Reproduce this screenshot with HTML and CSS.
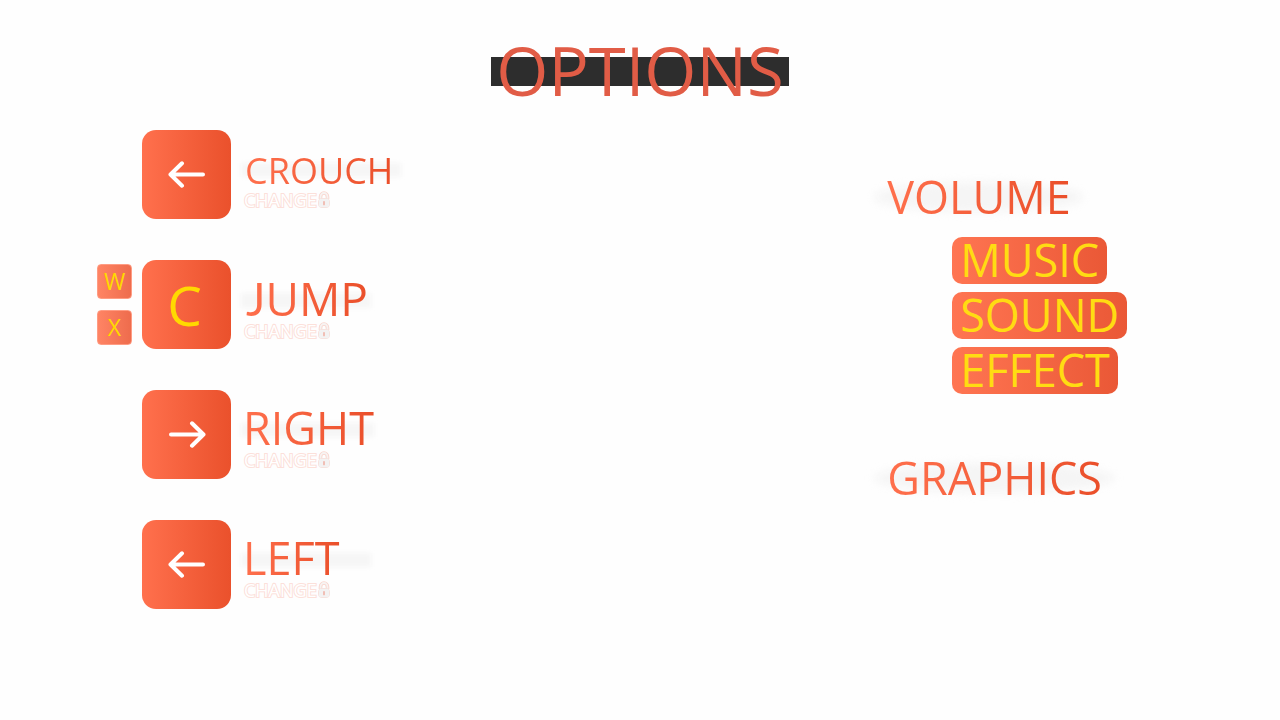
FILE: index.html
```html
<!DOCTYPE html>
<html lang="en">
<head>
<meta charset="utf-8">
<title>Options</title>
<meta name="viewport" content="width=device-width, initial-scale=1">
<link rel="stylesheet" href="styles.css">
</head>
<body>
<svg class="defs" width="0" height="0" aria-hidden="true">
  <symbol id="arrow" viewBox="0 0 38 28">
    <path d="M2.500 13.500H35M2.500 13.500L14 2.300M2.500 13.500L14 24.700" fill="none" stroke="#fff" stroke-width="4" stroke-linecap="round" stroke-linejoin="round"/>
  </symbol>
  <symbol id="lock" viewBox="0 0 14 18">
    <path d="M3.500 8V6a3.500 4 0 0 1 7 0V8" fill="none" stroke="#f9d5cd" stroke-width="3.600"/>
    <path d="M3.500 8V6a3.500 4 0 0 1 7 0V8" fill="none" stroke="#f7f3f2" stroke-width="1.800"/>
    <rect x="1.500" y="7.500" width="11" height="9" rx="3.500" fill="#f3f2f2" stroke="#f9d5cd"/>
    <path d="M7 10.800v2.600" stroke="#f0b9ae" stroke-width="1.800" stroke-linecap="round"/>
  </symbol>
</svg>
<header class="header"><h1 class="title">OPTIONS</h1></header>
<main class="options">
  <section class="controls" aria-label="Controls">
    <div class="control">
      <button class="key" aria-label="Crouch key: left arrow"><svg class="arrow"><use href="#arrow"/></svg></button>
      <div class="info">
        <h2 class="label label-compact"><span class="ink">CROUCH</span></h2>
        <button class="change">CHANGE<svg class="lock"><use href="#lock"/></svg></button>
      </div>
    </div>
    <div class="control">
      <div class="alternates">
        <button class="key key-small">W</button>
        <button class="key key-small">X</button>
      </div>
      <button class="key">C</button>
      <div class="info">
        <h2 class="label label-wide"><span class="ink"><span class="short-j">J</span>UMP</span></h2>
        <button class="change">CHANGE<svg class="lock"><use href="#lock"/></svg></button>
      </div>
    </div>
    <div class="control">
      <button class="key" aria-label="Right key: right arrow"><svg class="arrow arrow-right"><use href="#arrow"/></svg></button>
      <div class="info">
        <h2 class="label"><span class="ink">RIGHT</span></h2>
        <button class="change">CHANGE<svg class="lock"><use href="#lock"/></svg></button>
      </div>
    </div>
    <div class="control">
      <button class="key" aria-label="Left key: left arrow"><svg class="arrow"><use href="#arrow"/></svg></button>
      <div class="info">
        <h2 class="label"><span class="ink">LEFT</span></h2>
        <button class="change">CHANGE<svg class="lock"><use href="#lock"/></svg></button>
      </div>
    </div>
  </section>
  <div class="settings">
    <section class="group">
      <h2 class="heading"><span class="ink">VOLUME</span></h2>
      <div class="pills">
        <button class="pill">MUSIC</button>
        <button class="pill">SOUND</button>
        <button class="pill">EFFECT</button>
      </div>
    </section>
    <section class="group">
      <h2 class="heading"><span class="ink">GRAPHICS</span></h2>
    </section>
  </div>
</main>
</body>
</html>
```

FILE: styles.css
```css
* { box-sizing: border-box; }
body {
  margin: 0;
  background: #fefefe;
  font-family: "Open Sans", "Noto Sans", sans-serif;
}
h1, h2 { margin: 0; font-weight: 400; }
button {
  margin: 0;
  padding: 0;
  border: 0;
  background: none;
  font: inherit;
  cursor: pointer;
}
.defs { position: absolute; }

.header {
  display: flex;
  justify-content: center;
  padding: 30px 0 20px;
}
.title {
  padding: 0 5px;
  font-size: 67px;
  line-height: 80px;
  color: #e15c46;
  background: linear-gradient(#2d2d2d, #2d2d2d) 0 27px / 100% 29px no-repeat;
}

.options {
  display: grid;
  grid-template-columns: 69% 31%;
}
.controls {
  display: flex;
  flex-direction: column;
  gap: 41px;
  padding-left: 97px;
}
.control {
  display: grid;
  grid-template-columns: 35px 89px 1fr;
  column-gap: 10px;
  align-items: center;
}
.control > .key { grid-column: 2; }
.alternates {
  display: flex;
  flex-direction: column;
  gap: 11px;
}
.key {
  display: flex;
  align-items: center;
  justify-content: center;
  height: 89px;
  padding-right: 4px;
  border-radius: 14px;
  background: linear-gradient(90deg, #ff704d, #ea512c);
  color: #ffd900;
  font-size: 55px;
  line-height: 86px;
}
.key:has(.arrow) { padding-right: 0; }
.key-small {
  height: 35px;
  padding-right: 0;
  border: 1px solid #ff9c83;
  border-radius: 4px;
  background: linear-gradient(90deg, #ff8464, #ee6c4d);
  font-size: 23px;
  line-height: 33px;
}
.arrow { width: 38px; height: 28px; }
.arrow-right { transform: scaleX(-1); }

.info {
  display: flex;
  flex-direction: column;
  align-items: flex-start;
  padding-top: 5px;
}
.ink {
  background: linear-gradient(90deg, #ff704d, #ea4f2a);
  background-clip: text;
  -webkit-background-clip: text;
  color: transparent;
}
.label {
  position: relative;
  z-index: 0;
  min-width: 130px;
  padding: 2px 0 0 2px;
  font-size: 45px;
  line-height: 44px;
}
.label::before {
  content: "";
  position: absolute;
  z-index: -1;
  inset: 19px 0 13px;
  background: #f6f6f6;
  filter: blur(2px);
}
.label-compact {
  padding: 7px 8px 0 4px;
  font-size: 36px;
  line-height: 39px;
}
.label-wide { font-size: 46px; }
.label-wide .ink { padding-left: 3px; }
.short-j { font-family: Lato, sans-serif; }
.change {
  display: flex;
  align-items: center;
  padding-left: 3px;
  font-size: 18px;
  line-height: 20px;
  color: #fff;
  -webkit-text-stroke: 2px #fce0da;
  paint-order: stroke fill;
}
.lock { width: 14px; height: 18px; }

.settings {
  display: flex;
  flex-direction: column;
  gap: 61px;
  padding: 44px 0 0 3px;
}
.group {
  display: flex;
  flex-direction: column;
  align-items: flex-start;
  gap: 17px;
}
.heading {
  position: relative;
  z-index: 0;
  padding-left: 1px;
  font-size: 45px;
  line-height: 46px;
}
.heading::before {
  content: "";
  position: absolute;
  z-index: -1;
  inset: 8px -12px;
  border-radius: 50%;
  background: #f5f5f5;
  filter: blur(4px);
}
.pills {
  display: flex;
  flex-direction: column;
  align-items: flex-start;
  gap: 8px;
  padding-left: 66px;
}
.pill {
  padding: 0 8px 2px;
  border-radius: 10px;
  background: linear-gradient(90deg, #ff7552, #ea5836);
  color: #ffdc12;
  font-size: 45px;
  line-height: 45px;
}
```
